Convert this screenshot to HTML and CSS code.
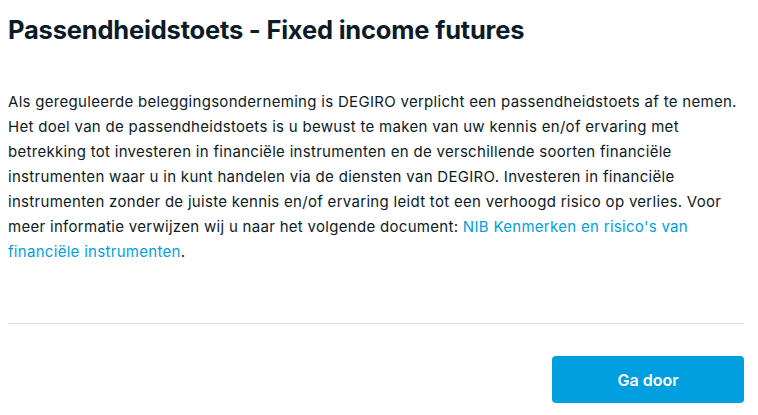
FILE: index.html
```html
<!DOCTYPE html>
<html>
<head>
    <title>Passendheidstoets - Fixed income futures</title>
    <link rel="stylesheet" href="styles.css">
</head>
<body>
    <div class="dialog">
        <h2>Passendheidstoets - Fixed income futures</h2>

        <p class="intro">
            Als gereguleerde beleggingsonderneming is DEGIRO verplicht een passendheidstoets af te nemen.
            Het doel van de passendheidstoets is u bewust te maken van uw kennis en/of ervaring met
            betrekking tot investeren in financiële instrumenten en de verschillende soorten financiële
            instrumenten waar u in kunt handelen via de diensten van DEGIRO. Investeren in financiële
            instrumenten zonder de juiste kennis en/of ervaring leidt tot een verhoogd risico op verlies. Voor
            meer informatie verwijzen wij u naar het volgende document: <a href="#">NIB Kenmerken en risico's van
            financiële instrumenten</a>.
        </p>

        <div class="footer">
            <button>Ga door</button>
        </div>
    </div>
</body>
</html>
```

FILE: styles.css
```css
* {
    box-sizing: border-box;
    font-family: 'Inter', 'Liberation Sans', sans-serif;
}

body {
    margin: 0;
    background: #fff;
    color: #0c1b28;
}

.dialog {
    width: 752px;
    padding: 0 8px;
}

h2 {
    margin: 0;
    padding-top: 15px;
    font-size: 25.5px;
    font-weight: 700;
    line-height: 30px;
    letter-spacing: -0.2px;
}

.intro {
    margin: 44px 0 0;
    font-size: 15px;
    line-height: 25px;
    letter-spacing: 0.3px;
    padding-bottom: 59px;
    border-bottom: 1px solid #d9dee3;
}

.intro a {
    color: #009fdf;
    text-decoration: none;
}

.footer {
    display: flex;
    justify-content: flex-end;
    padding-top: 32px;
}

button {
    width: 192px;
    height: 47px;
    background: #009fdf;
    color: #fff;
    border: none;
    border-radius: 4px;
    font-size: 16px;
    font-weight: 600;
    cursor: pointer;
}
```
